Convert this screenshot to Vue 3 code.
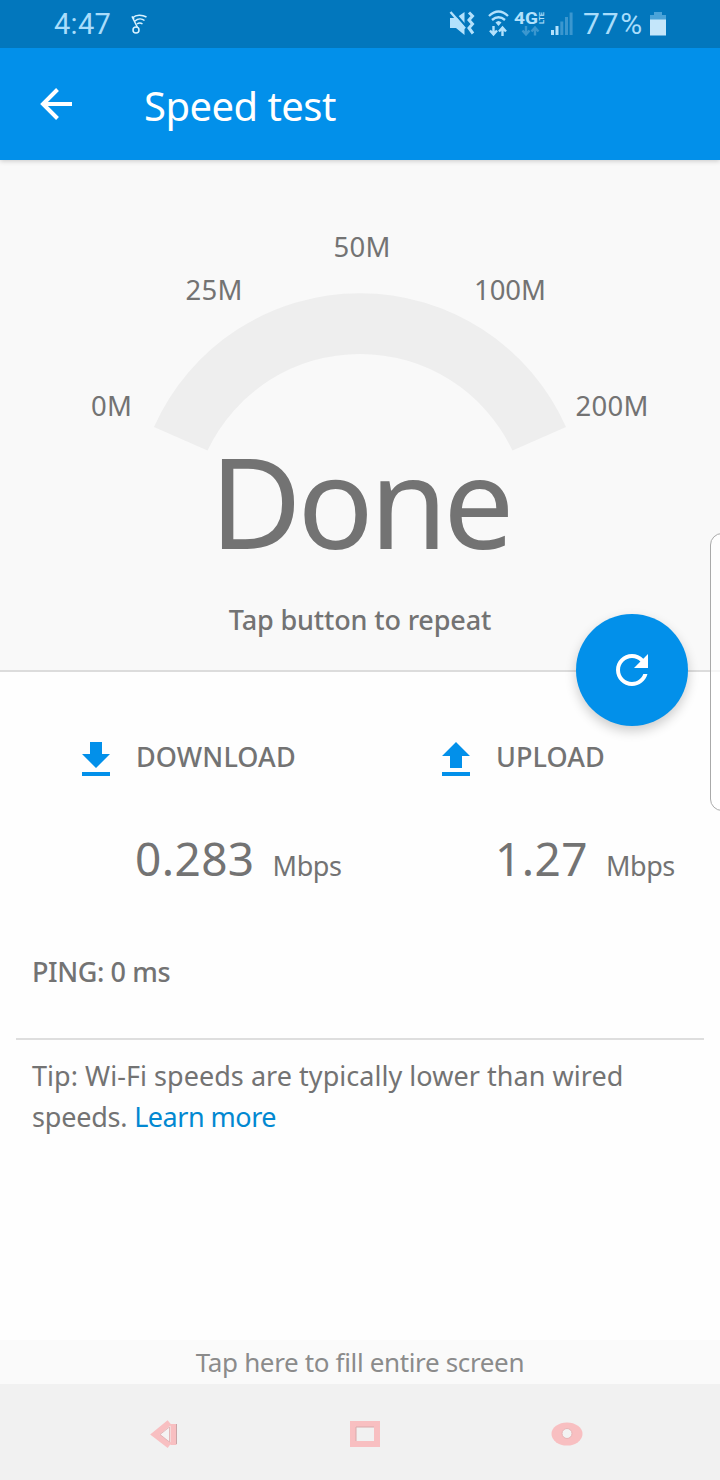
<template>
    <div class="screen">
        <div class="status-bar">
            <span class="clock">4:47</span>
            <svg class="note-icon" width="18" height="22" viewBox="0 0 18 22" fill="none" stroke="#d9f3ff" stroke-width="1.5">
                <circle cx="5" cy="17" r="3" />
                <path d="M6.500 14.500 1 3.500 3 6M2 4.500C5 1.500 11 1.500 15.500 4M4 8C7 5.500 11 5.500 13.500 7.500M6 11C8 9.500 9.500 9.500 11.500 11" />
            </svg>
            <svg class="status-icons" width="126" height="30" viewBox="0 0 126 30">
                <path d="M1 9H7L15.500 3V26L7 19H1Z" fill="#b3e1fc" />
                <path d="M3 1 19 20" stroke="#0277bd" stroke-width="2.500" />
                <path d="M1.500 3 16 19.500" stroke="#b3e1fc" stroke-width="2.400" />
                <path d="M20 3.500l3.500 3.500-3.500 4 3.500 4-3.500 4 4 5.500" fill="none" stroke="#b3e1fc" stroke-width="3" />
                <g fill="none" stroke="#b3e1fc" stroke-width="2.400">
                    <path d="M40 7Q49.500-2 59 7M43 11Q49.500 5.500 56 11" />
                    <path d="M46.500 13.500Q49.500 10.500 52.500 13.500L49.500 17z" fill="#b3e1fc" stroke="none" />
                    <path d="M44.500 17v8M41 21.500l3.500 4 3.500-4M53.500 27v-8M50 22.500l3.500-4 3.500 4" />
                </g>
                <text class="net" x="65" y="15" textLength="24" lengthAdjust="spacingAndGlyphs">4G</text>
                <text class="lte" transform="translate(95 15) rotate(-90)" textLength="12" lengthAdjust="spacingAndGlyphs">LTE</text>
                <path d="M77 17v8M73.500 21.500l3.500 4 3.500-4M86 26.500v-8M82.500 22.500l3.500-4 3.500 4" fill="none" stroke="#3b97cf" stroke-width="2.400" />
                <path d="M102 21h3v5h-3zM106.500 17h3v9h-3z" fill="#b3e1fc" />
                <path d="M111.300 12.500h3v13.500h-3zM116 8h3v18h-3zM120.600 3.500h3v22.500h-3z" fill="#3b97cf" />
            </svg>
            <span class="percent">77%</span>
            <svg class="battery" width="17" height="25" viewBox="0 0 17 25">
                <path d="M4 0h8v3h4v5H0V3h4z" fill="#4aa3d9" />
                <path d="M0 7.500h16v16H0z" fill="#c4e6fa" />
            </svg>
        </div>

        <header class="app-bar">
            <svg width="34" height="34" viewBox="0 0 34 34" fill="none" stroke="#fff" stroke-width="4">
                <path d="M32 17H3M17.500 2.500 3 17 17.500 31.500" />
            </svg>
            <h1>Speed test</h1>
        </header>

        <section class="gauge-panel">
            <svg class="gauge" width="720" height="292" viewBox="0 160 720 292">
                <path
                    d="M154 427A225.500 225.500 0 0 1 566 427L512.500 450.500A168.700 168.700 0 0 0 207.500 450.500Z"
                    fill="#eee"
                />
                <text
                    v-for="mark in marks"
                    :key="mark.label"
                    class="mark"
                    :x="mark.x"
                    :y="mark.y"
                    :textLength="mark.width"
                >{{ mark.label }}</text>
            </svg>
            <div class="state">Done</div>
            <div class="hint">Tap button to repeat</div>
            <button class="repeat" aria-label="Repeat">
                <svg width="48" height="48" viewBox="0 0 24 24" fill="#fff">
                    <path d="M17.650 6.350C16.200 4.900 14.210 4 12 4c-4.420 0-7.990 3.580-7.990 8s3.570 8 7.990 8c3.730 0 6.840-2.550 7.730-6h-2.080c-.82 2.330-3.040 4-5.650 4-3.310 0-6-2.690-6-6s2.690-6 6-6c1.660 0 3.140.69 4.220 1.780L13 11h7V4l-2.350 2.350z" />
                </svg>
            </button>
        </section>

        <section class="results">
            <div v-for="item in results" :key="item.name" class="result" :class="item.name">
                <div class="result-head">
                    <svg width="28" height="34" viewBox="0 0 28 34" fill="#0290ea">
                        <path :d="item.icon" />
                        <path d="M0 30h28v4H0z" />
                    </svg>
                    <span>{{ item.label }}</span>
                </div>
                <div class="result-value">
                    <span class="number">{{ item.value }}</span>
                    <span class="unit">Mbps</span>
                </div>
            </div>
        </section>

        <div class="ping">PING: 0 ms</div>

        <p class="tip">
            <span class="tip-first">Tip: Wi-Fi speeds are typically lower than wired</span><br>
            speeds. <a>Learn more</a>
        </p>

        <div class="fill-hint"><span>Tap here to fill entire screen</span></div>

        <nav class="nav-bar">
            <svg width="30" height="30" viewBox="0 0 30 30" fill="none" stroke="#f8bfc1" stroke-width="6">
                <path d="M24.500 5V26M20.500 3.500 6 15.500 20.500 26.500" />
                <path d="M20.500 8v15L11 15.500z" fill="#f5f3f3" stroke="#dda9ac" stroke-width=".8" />
                <path d="M27.500 5v20" stroke="#c9a5a7" stroke-width="1" />
            </svg>
            <svg width="32" height="28" viewBox="0 0 32 28" fill="none">
                <path d="M4 4h24v20H4z" stroke="#f8bfc1" stroke-width="6" />
                <path d="M7 21V7h18" stroke="#d9a9ab" />
            </svg>
            <svg width="32" height="26" viewBox="0 0 32 26">
                <ellipse cx="16" cy="13" rx="15.500" ry="11.500" fill="#f8bfc1" />
                <circle cx="16" cy="12.500" r="5" fill="#f2f2f2" stroke="#e7b4b6" />
            </svg>
        </nav>

        <div class="edge-handle"></div>
    </div>
</template>

<script setup>
    const marks = [
        { label: '0M', x: 91, y: 415.500, width: 41 },
        { label: '25M', x: 185.500, y: 299.500, width: 57 },
        { label: '50M', x: 333.500, y: 256.500, width: 57 },
        { label: '100M', x: 474, y: 299.500, width: 72 },
        { label: '200M', x: 575.500, y: 415.500, width: 73 }
    ];

    const results = [
        { name: 'download', label: 'DOWNLOAD', value: '0.283', icon: 'M8 0h12v12h8L14 26 0 12h8z' },
        { name: 'upload', label: 'UPLOAD', value: '1.27', icon: 'M8 26h12V14h8L14 0 0 14h8z' }
    ];
</script>

<style>
    body {
        margin: 0;
        background: #fff;
    }
</style>

<style scoped>
    .screen {
        position: relative;
        display: flex;
        flex-direction: column;
        width: 720px;
        height: 1480px;
        overflow: hidden;
        background: #fefefe;
        color: #737373;
        font-family: "Noto Sans", "Open Sans", sans-serif;
        font-size: 27px;
    }

    .status-bar {
        display: flex;
        align-items: center;
        box-sizing: border-box;
        height: 48px;
        padding-left: 54px;
        background: #0277bd;
        color: #a9ddfb;
        font: 29px/48px Roboto, sans-serif;
        z-index: 2;
    }

    .clock {
        width: 77px;
        letter-spacing: 0.3px;
    }

    .status-icons {
        margin-left: 300px;
    }

    .net {
        fill: #b3e1fc;
        font: bold 17px Roboto, sans-serif;
    }

    .lte {
        fill: #b3e1fc;
        font: bold 8px Roboto, sans-serif;
    }

    .percent {
        width: 67px;
        margin-left: 8px;
        font-size: 30px;
        letter-spacing: 1.8px;
    }

    .app-bar {
        display: flex;
        align-items: center;
        gap: 70px;
        height: 112px;
        padding-left: 40px;
        background: #0290ea;
        box-shadow: 0 1px 5px rgba(0, 0, 0, 0.2);
        color: #fff;
        z-index: 1;
    }

    .app-bar h1 {
        margin: 2px 0 0;
        font-size: 40px;
        font-weight: 400;
        letter-spacing: -0.55px;
    }

    .gauge-panel {
        position: relative;
        box-sizing: border-box;
        height: 512px;
        border-bottom: 2px solid #dcdcdc;
        background: #f9f9f9;
        text-align: center;
    }

    .gauge {
        display: block;
    }

    .mark {
        fill: #737373;
        font-size: 27.5px;
    }

    .state {
        height: 96px;
        font-size: 126px;
        font-weight: 430;
        line-height: 96px;
        letter-spacing: -4.2px;
    }

    .hint {
        margin-top: 52px;
        font-weight: 500;
        line-height: 40px;
        letter-spacing: -0.15px;
    }

    .repeat {
        position: absolute;
        top: 454px;
        left: 576px;
        display: flex;
        align-items: center;
        justify-content: center;
        width: 112px;
        height: 112px;
        padding: 0;
        border: none;
        border-radius: 50%;
        background: #0290ea;
        box-shadow: 0 5px 12px rgba(0, 0, 0, 0.2);
        z-index: 1;
    }

    .results {
        display: grid;
        grid-template-columns: 1fr 1fr;
        height: 258px;
    }

    .result {
        padding: 64px 0 0 82px;
    }

    .result-head {
        display: flex;
        align-items: center;
        gap: 26px;
        height: 46px;
        font-weight: 500;
    }

    .result-head span {
        position: relative;
        top: -3px;
        letter-spacing: 0.1px;
    }

    .result-value {
        display: flex;
        align-items: baseline;
        gap: 18px;
        height: 60px;
        margin: 46px 0 0 53px;
        line-height: 60px;
    }

    .number {
        font-size: 46px;
        letter-spacing: 0.4px;
    }

    .unit {
        letter-spacing: -0.4px;
    }

    .ping {
        box-sizing: border-box;
        height: 110px;
        margin: 0 16px;
        padding: 22px 16px 0;
        border-bottom: 2px solid #dedede;
        font-weight: 500;
        line-height: 40px;
        letter-spacing: -0.4px;
    }

    .tip {
        margin: 15px 32px 0;
        line-height: 41px;
        letter-spacing: -0.2px;
        white-space: nowrap;
    }

    .tip-first {
        letter-spacing: 0.04px;
    }

    .tip a {
        color: #0288d1;
        letter-spacing: -0.5px;
    }

    .fill-hint {
        height: 44px;
        margin-top: auto;
        background: #fafafa;
        color: #8b8b8b;
        font-size: 26px;
        line-height: 44px;
        letter-spacing: -0.35px;
        text-align: center;
    }

    .nav-bar {
        display: flex;
        align-items: center;
        justify-content: space-between;
        box-sizing: border-box;
        height: 96px;
        padding: 3px 137px 0 149px;
        background: #f1f1f1;
    }

    .edge-handle {
        position: absolute;
        top: 533px;
        left: 710px;
        box-sizing: border-box;
        width: 30px;
        height: 278px;
        border: 1px solid #aaa;
        border-radius: 12px;
        background: rgba(255, 255, 255, 0.75);
    }
</style>
